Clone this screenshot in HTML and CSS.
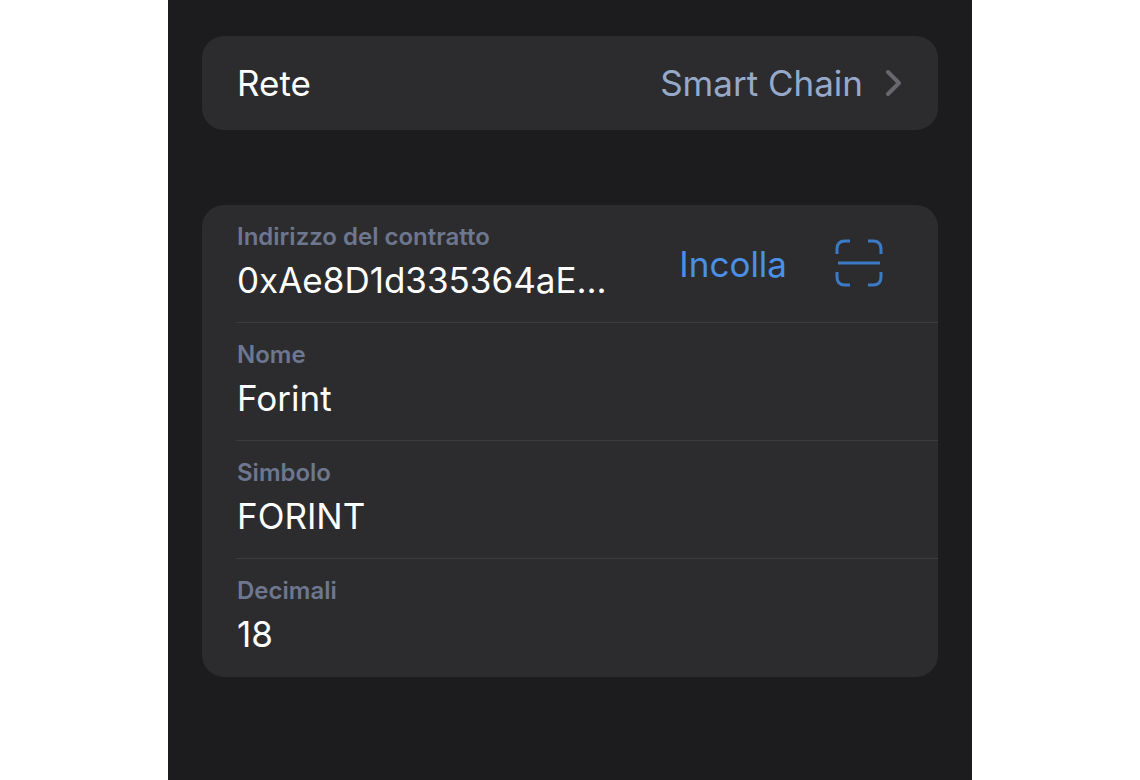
FILE: index.html
```html
<!DOCTYPE html>
<html lang="it">
<head>
    <meta charset="utf-8">
    <title>Token personalizzato</title>
    <link rel="stylesheet" href="styles.css">
</head>
<body>
    <main class="screen">
        <button type="button" class="card network">
            <span class="network-label">Rete</span>
            <span class="network-value">Smart Chain</span>
            <svg class="chevron" width="18" height="28" viewBox="0 0 18 28" aria-hidden="true">
                <path d="M3 3 L14 14 L3 25" />
            </svg>
        </button>

        <form class="card token">
            <div class="row">
                <div class="field">
                    <label for="address">Indirizzo del contratto</label>
                    <input type="text" id="address" value="0xAe8D1d335364aE...">
                </div>
                <button type="button" class="paste">Incolla</button>
                <button type="button" class="scan" aria-label="Scansiona">
                    <svg width="48" height="48" viewBox="0 0 48 48" aria-hidden="true">
                        <path d="M2 14 V9 Q2 1 10 1 H15 M33 1 H38 Q46 1 46 9 V14 M46 32 V37 Q46 45 38 45 H33 M15 45 H10 Q2 45 2 37 V32 M3 23 H45" />
                    </svg>
                </button>
            </div>
            <div class="row">
                <div class="field">
                    <label for="name">Nome</label>
                    <input type="text" id="name" value="Forint">
                </div>
            </div>
            <div class="row">
                <div class="field">
                    <label for="symbol">Simbolo</label>
                    <input type="text" id="symbol" value="FORINT">
                </div>
            </div>
            <div class="row">
                <div class="field">
                    <label for="decimals">Decimali</label>
                    <input type="text" id="decimals" value="18">
                </div>
            </div>
        </form>
    </main>
</body>
</html>
```

FILE: styles.css
```css
* {
    box-sizing: border-box;
}
body {
    margin: 0;
    background-color: #fff;
    font-family: Inter, "Liberation Sans", sans-serif;
}
.screen {
    max-width: 804px;
    min-height: 100vh;
    margin: 0 auto;
    padding: 36px 34px;
    background-color: #1c1c1e;
}
button,
input {
    border: 0;
    padding: 0;
    background: none;
    font-family: inherit;
    font-size: 35px;
}
.card {
    background-color: #2c2c2e;
    border-radius: 22px;
}
.network {
    display: flex;
    align-items: center;
    width: 100%;
    padding: 24px 35px;
    line-height: 46px;
    margin-bottom: 75px;
}
.network-label {
    color: #fff;
}
.network-value {
    margin-left: auto;
    margin-right: 22px;
    color: #97a9c9;
}
.chevron {
    fill: none;
    stroke: #68686c;
    stroke-width: 4;
    stroke-linecap: round;
    stroke-linejoin: round;
}
.token {
    padding-left: 34px;
}
.row {
    display: flex;
    align-items: center;
    height: 118px;
    border-bottom: 1px solid #3c3c3f;
}
.row:last-child {
    border-bottom: 0;
}
.field {
    flex: 1;
    min-width: 0;
    padding-left: 1px;
}
.field label {
    display: block;
    color: #6d778f;
    font-size: 24px;
    font-weight: 600;
    line-height: 32px;
}
.field input {
    display: block;
    width: 100%;
    height: 54px;
    color: #fff;
}
.paste {
    margin-right: 48px;
    color: #4a90e8;
}
.scan {
    display: flex;
    margin-right: 55px;
}
.scan svg {
    fill: none;
    overflow: visible;
    stroke: #3b7ac6;
    stroke-width: 3;
}
```
